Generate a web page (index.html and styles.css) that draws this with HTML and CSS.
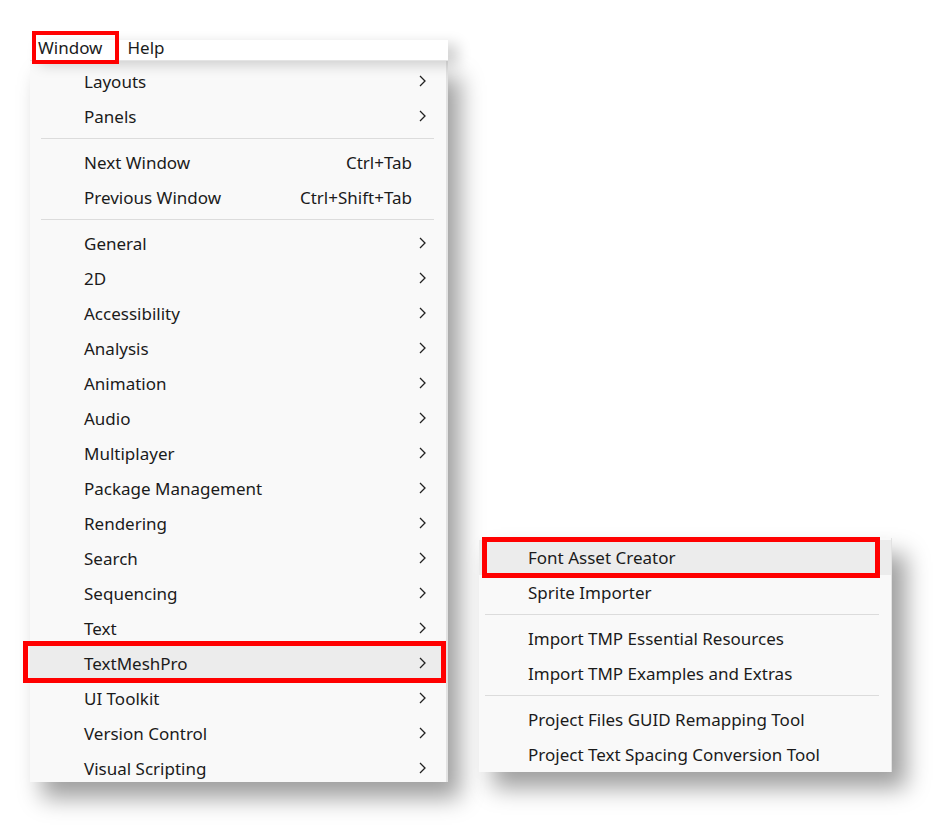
FILE: index.html
```html
<!DOCTYPE html>
<html lang="en">

<head>
    <meta charset="UTF-8">
    <meta name="viewport" content="width=device-width, initial-scale=1.0">
    <title>Window menu</title>
    <link rel="stylesheet" href="styles.css">
</head>

<body>
    <div id="stage">
        <div id="menu-col">
            <ul id="menubar">
                <li class="bar-item marked">Window</li>
                <li class="bar-item">Help</li>
            </ul>
            <div id="main-menu">
                <ul class="menu-list">
                    <li class="item">Layouts<span class="arrow"></span></li>
                    <li class="item">Panels<span class="arrow"></span></li>
                    <li class="sep"></li>
                    <li class="item">Next Window<span class="key">Ctrl+Tab</span></li>
                    <li class="item">Previous Window<span class="key">Ctrl+Shift+Tab</span></li>
                    <li class="sep"></li>
                    <li class="item">General<span class="arrow"></span></li>
                    <li class="item">2D<span class="arrow"></span></li>
                    <li class="item">Accessibility<span class="arrow"></span></li>
                    <li class="item">Analysis<span class="arrow"></span></li>
                    <li class="item">Animation<span class="arrow"></span></li>
                    <li class="item">Audio<span class="arrow"></span></li>
                    <li class="item">Multiplayer<span class="arrow"></span></li>
                    <li class="item">Package Management<span class="arrow"></span></li>
                    <li class="item">Rendering<span class="arrow"></span></li>
                    <li class="item">Search<span class="arrow"></span></li>
                    <li class="item">Sequencing<span class="arrow"></span></li>
                    <li class="item">Text<span class="arrow"></span></li>
                    <li class="item hover marked">TextMeshPro<span class="arrow"></span></li>
                    <li class="item">UI Toolkit<span class="arrow"></span></li>
                    <li class="item">Version Control<span class="arrow"></span></li>
                    <li class="item">Visual Scripting<span class="arrow"></span></li>
                </ul>
            </div>
        </div>

        <!-- TextMeshPro 子菜单 -->
        <div id="sub-menu">
            <ul class="menu-list">
                <li class="item hover marked">Font Asset Creator</li>
                <li class="item">Sprite Importer</li>
                <li class="sep"></li>
                <li class="item">Import TMP Essential Resources</li>
                <li class="item">Import TMP Examples and Extras</li>
                <li class="sep"></li>
                <li class="item">Project Files GUID Remapping Tool</li>
                <li class="item">Project Text Spacing Conversion Tool</li>
            </ul>
        </div>
    </div>
</body>

</html>
```

FILE: styles.css
```css
* {
    margin: 0;
    padding: 0;
    box-sizing: border-box;
}

ul {
    list-style: none;
}

body {
    background: #fff;
    font-family: "Noto Sans", "Open Sans", sans-serif;
    font-size: 17px;
    color: #1b1b1b;
}

#stage {
    position: relative;
    width: 940px;
    height: 835px;
    padding: 40px 0 0 30px;
}

#menu-col {
    width: 418px;
}

/* 顶部菜单栏 */
#menubar {
    position: relative;
    z-index: 2;
    display: flex;
    height: 21px;
    background: #fff;
    border-bottom: 1px solid #e4e4e4;
    line-height: 16px;
    box-shadow: 10px 4px 14px rgba(0, 0, 0, 0.18);
}

.bar-item {
    position: relative;
    padding: 0 17px 0 8px;
}

.bar-item.marked::after {
    content: "";
    position: absolute;
    top: -9px;
    bottom: -4px;
    left: 2px;
    right: 0;
    border: 4px solid #f00;
}

/* 下拉菜单 */
#main-menu {
    position: relative;
    height: 721px;
    background: #f9f9f9;
    border-right: 2px solid #e2e2e2;
    padding-top: 3px;
    box-shadow: 12px 16px 22px rgba(0, 0, 0, 0.38);
}

.item {
    position: relative;
    display: flex;
    align-items: center;
    height: 35px;
    padding: 0 20px 0 54px;
    white-space: nowrap;
}

.item.hover {
    background: #ececec;
}

.key {
    margin-left: auto;
    margin-right: 14px;
}

.arrow {
    margin-left: auto;
    width: 7px;
    height: 12px;
    background: no-repeat center / 7px 12px url("data:image/svg+xml,%3Csvg xmlns='http://www.w3.org/2000/svg' width='7' height='12' viewBox='0 0 7 12'%3E%3Cpolyline points='1,1 6,6 1,11' fill='none' stroke='%23222' stroke-width='1.3'/%3E%3C/svg%3E");
    position: relative;
    top: -1px;
}

.sep {
    height: 11px;
    padding-top: 4px;
}

.sep::before {
    content: "";
    display: block;
    height: 1px;
    margin: 0 12px 0 11px;
    background: #dcdcdc;
}

/* 红色标注框 */
.item.marked::after {
    content: "";
    position: absolute;
    top: -5px;
    bottom: -2px;
    left: -7px;
    right: 0;
    border: 5px solid #f00;
}

#sub-menu {
    position: absolute;
    left: 479px;
    top: 538px;
    width: 413px;
    height: 234px;
    padding-top: 2px;
    background: #f9f9f9;
    border-right: 1px solid #e2e2e2;
    box-shadow: 14px 16px 22px rgba(0, 0, 0, 0.38);
}

#sub-menu .item {
    padding-left: 49px;
}

#sub-menu .sep::before {
    margin: 0 12px 0 6px;
}

#sub-menu .item.marked::after {
    top: -3px;
    bottom: -3px;
    left: 3px;
    right: 11px;
}
```
